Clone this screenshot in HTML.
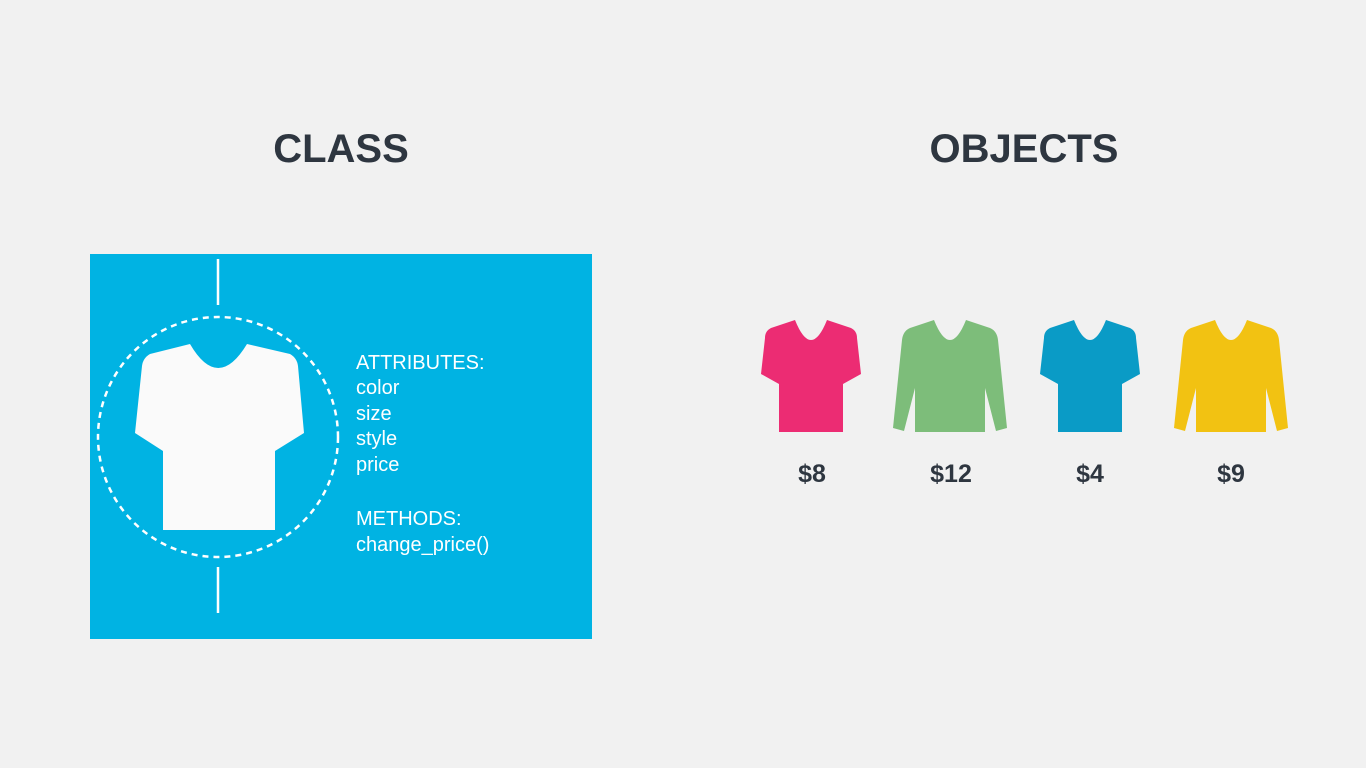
<!DOCTYPE html>
<html><head><meta charset="utf-8"><style>
html,body{margin:0;padding:0;width:1366px;height:768px;overflow:hidden;background:#f1f1f1;font-family:"Liberation Sans",sans-serif}
</style></head><body>
<svg width="1366" height="768" viewBox="0 0 1366 768" xmlns="http://www.w3.org/2000/svg" style="position:absolute;left:0;top:0">
<rect width="1366" height="768" fill="#f1f1f1"/>
<text x="341" y="162" text-anchor="middle" font-family="Liberation Sans, sans-serif" font-weight="bold" font-size="40" fill="#2e3640">CLASS</text>
<text x="1024" y="162" text-anchor="middle" font-family="Liberation Sans, sans-serif" font-weight="bold" font-size="40" fill="#2e3640">OBJECTS</text>
<rect x="90" y="254" width="502" height="385" fill="#00b3e3"/>
<line x1="218" y1="259" x2="218" y2="305" stroke="#fff" stroke-width="2.5"/>
<line x1="218" y1="567" x2="218" y2="613" stroke="#fff" stroke-width="2.5"/>
<circle cx="218" cy="437" r="120" fill="none" stroke="#fff" stroke-width="2.5" stroke-dasharray="6 5"/>
<path d="M190,344 Q218,392 247,344 L290,354 Q297,358 298,366 L304,433 L275,451 L275,530 L163,530 L163,451 L135,433 L142,366 Q143,358 150,354 Z" fill="#fafafa"/>
<g font-family="Liberation Sans, sans-serif" font-size="20" fill="#fff">
<text x="356" y="369">ATTRIBUTES:</text>
<text x="356" y="394">color</text>
<text x="356" y="420">size</text>
<text x="356" y="445">style</text>
<text x="356" y="471">price</text>
<text x="356" y="525">METHODS:</text>
<text x="356" y="551">change_price()</text>
</g>
<g>
<path transform="translate(811,0)" d="M-16,320 Q0,360 16,320 L40,328 Q46,331 46,338 L50,374 L32,384 L32,432 L-32,432 L-32,384 L-50,374 L-46,338 Q-46,331 -40,328 Z" fill="#ec2c73"/>
<path transform="translate(950,0)" d="M-16,320 Q0,360 16,320 L40,328 Q47,331 48,340 L57,428 L46,431 L35,388 L35,432 L-35,432 L-35,388 L-46,431 L-57,428 L-48,340 Q-47,331 -40,328 Z" fill="#7dbd7a"/>
<path transform="translate(1090,0)" d="M-16,320 Q0,360 16,320 L40,328 Q46,331 46,338 L50,374 L32,384 L32,432 L-32,432 L-32,384 L-50,374 L-46,338 Q-46,331 -40,328 Z" fill="#0a9bc6"/>
<path transform="translate(1231,0)" d="M-16,320 Q0,360 16,320 L40,328 Q47,331 48,340 L57,428 L46,431 L35,388 L35,432 L-35,432 L-35,388 L-46,431 L-57,428 L-48,340 Q-47,331 -40,328 Z" fill="#f2c212"/>
</g>
<g font-family="Liberation Sans, sans-serif" font-size="25" font-weight="bold" fill="#2e3640" text-anchor="middle">
<text x="812" y="482">$8</text>
<text x="951" y="482">$12</text>
<text x="1090" y="482">$4</text>
<text x="1231" y="482">$9</text>
</g>
</svg>
</body></html>
